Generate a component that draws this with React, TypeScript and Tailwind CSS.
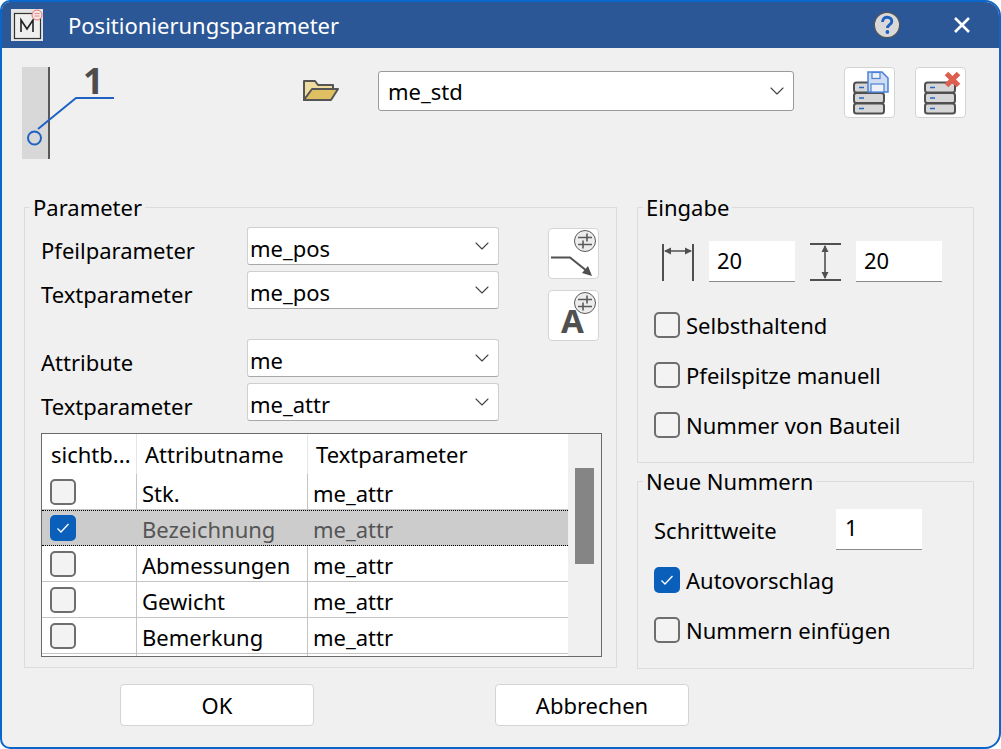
import { ChevronDown } from 'lucide-react';

const FONT = "font-['Noto_Sans',sans-serif]";

function Combo({ value, className, strong = false }: { value: string; className: string; strong?: boolean }) {
  return (
    <div
      className={`flex items-center justify-between bg-white border rounded-[3px] pr-[4px] text-[22px] leading-none ${
        strong ? 'border-[#9a9a9a] pl-[9px]' : 'border-[#cfcfcf] border-b-[#a8a8a8] pl-[2px] pt-[3px]'
      } ${className}`}
    >
      <span>{value}</span>
      <ChevronDown size={24} strokeWidth={1.1} className={`text-[#444] ${strong ? '' : '-mt-[3px]'}`} />
    </div>
  );
}

function Check({ checked = false }: { checked?: boolean }) {
  if (checked) {
    return (
      <span className="flex items-center justify-center w-[26px] h-[26px] rounded-[5px] bg-[#0a5fbb] shrink-0">
        <svg width="14" height="12" viewBox="0 0 14 12" fill="none">
          <path d="M1.5 6.5 L5 10 L12.5 2" stroke="white" strokeWidth="1.3" />
        </svg>
      </span>
    );
  }
  return <span className="block w-[26px] h-[26px] rounded-[5px] border-2 border-[#6e6e6e] bg-[#f3f3f3] shrink-0" />;
}

function CheckRow({ label, checked }: { label: string; checked?: boolean }) {
  return (
    <div className="flex items-center gap-[6px] text-[22px] leading-none h-[26px]">
      <Check checked={checked} />
      <span>{label}</span>
    </div>
  );
}

function IconBtn({ children }: { children: React.ReactNode }) {
  return (
    <div className="w-[51px] h-[51px] bg-white border border-[#d4d4d4] rounded-[4px] shrink-0">
      {children}
    </div>
  );
}

function Sliders({ cx, cy }: { cx: number; cy: number }) {
  return (
    <g>
      <circle cx={cx} cy={cy} r="10.5" fill="#ececec" stroke="#5a5a5a" strokeWidth="1" />
      <path d={`M${cx - 7} ${cy - 3.5}H${cx + 7}M${cx - 7} ${cy + 3.5}H${cx + 7}M${cx + 2} ${cy - 7.5}V${cy + 0.5}M${cx - 2} ${cy - 0.5}V${cy + 7.5}`} stroke="#5a5a5a" strokeWidth="1.6" />
    </g>
  );
}

function Stack() {
  return (
    <g fill="#d6d6d6" stroke="#505050" strokeWidth="2">
      <rect x="9" y="14.5" width="30" height="10" rx="2.5" />
      <rect x="9" y="25" width="30" height="10" rx="2.5" />
      <rect x="9" y="35.5" width="30" height="10" rx="2.5" />
      <path d="M14 19.5h5M14 30h5M14 40.5h5" stroke="#2a68c4" strokeWidth="1.6" />
    </g>
  );
}

const rows = [
  { name: 'Stk.', selected: false },
  { name: 'Bezeichnung', selected: true },
  { name: 'Abmessungen', selected: false },
  { name: 'Gewicht', selected: false },
  { name: 'Bemerkung', selected: false },
];

export default function App() {
  return (
    <div className={`w-[1001px] h-[749px] bg-white text-black overflow-hidden ${FONT}`}>
      <div className="h-full flex flex-col bg-[#f0f0f0] border-2 border-[#0b66c9] rounded-tl-[10px] rounded-tr-[16px] rounded-bl-[10px] rounded-br-[16px] overflow-hidden">
        {/* Title bar */}
        <div className="h-[46px] shrink-0 bg-[#2b5797] flex items-center pl-[9px] pr-[28px] text-white">
          <svg width="34" height="34" viewBox="0 0 34 34" className="shrink-0">
            <rect width="32" height="32" y="1" fill="#e4e4e4" />
            <rect x="3.5" y="5.5" width="26" height="25" fill="#efefef" stroke="#333" strokeWidth="1.2" />
            <path d="M10 24V12L16 21L22 12V24" fill="none" stroke="#222" strokeWidth="1.6" />
            <circle cx="26" cy="7" r="5" fill="#f4e4e4" stroke="#e07a70" strokeWidth="1" />
            <path d="M23.5 5.5h5M23.5 8h5" stroke="#e07a70" strokeWidth="0.8" />
          </svg>
          <span className="ml-[23px] text-[22px] leading-none">Positionierungsparameter</span>
          <svg width="28" height="28" viewBox="0 0 28 28" className="ml-auto">
            <circle cx="14" cy="14" r="12.6" fill="#d9d9d9" stroke="#555" strokeWidth="1.2" />
            <path d="M9.5 11 C9.5 7.5 12 6.2 14.2 6.2 C17 6.2 18.8 8 18.8 10.4 C18.8 13.6 14.4 13.6 14.4 17" fill="none" stroke="#1f5fc0" strokeWidth="2.9" />
            <circle cx="14.4" cy="21" r="1.9" fill="#1f5fc0" />
          </svg>
          <svg width="18" height="18" viewBox="0 0 18 18" className="ml-[52px]">
            <path d="M2 2L16 16M16 2L2 16" stroke="white" strokeWidth="2.6" />
          </svg>
        </div>

        {/* Profile row */}
        <div className="flex h-[159px] shrink-0 pl-[20px] pt-[19px]">
          <svg width="96" height="94" viewBox="0 0 96 94" className="shrink-0 overflow-visible">
            <rect x="0" y="0" width="27" height="92" fill="#d8d8d8" />
            <path d="M27 0V92" stroke="#585858" strokeWidth="2" />
            <path d="M16 62L54 31H92" fill="none" stroke="#1f62c4" strokeWidth="2" />
            <circle cx="12.5" cy="71" r="6.5" fill="none" stroke="#1f62c4" strokeWidth="2" />
            <text x="61" y="27" fontFamily="Noto Sans, sans-serif" fontWeight="700" fontSize="36" fill="#4d4d4d">1</text>
          </svg>
          <svg width="38" height="24" viewBox="0 0 38 24" className="ml-[184px] mt-[11px] shrink-0">
            <path d="M2 22V3H13L16 7H31V12H10L2 22Z" fill="#f0dc9e" stroke="#555" strokeWidth="2" strokeLinejoin="round" />
            <path d="M2 22L10 11H36L29 22H2Z" fill="#e0bf62" stroke="#555" strokeWidth="2" strokeLinejoin="round" />
          </svg>
          <Combo strong value="me_std" className="ml-[38px] mt-[4px] w-[416px] h-[40px]" />
          <div className="ml-[50px] flex gap-[20px]">
            <IconBtn>
              <svg width="49" height="49" viewBox="0 0 49 49">
                <Stack />
                <path d="M23 4H37L43 10V24H23Z" fill="#cfdcf2" stroke="#4a80d8" strokeWidth="1.5" />
                <rect x="27" y="4.5" width="8" height="6" fill="#eef2f8" stroke="#4a80d8" strokeWidth="1.2" />
                <rect x="26" y="16" width="13" height="8" fill="#eef2f8" stroke="#4a80d8" strokeWidth="1.2" />
              </svg>
            </IconBtn>
            <IconBtn>
              <svg width="49" height="49" viewBox="0 0 49 49">
                <Stack />
                <path d="M30.5 5.5L42.5 17.5M42.5 5.5L30.5 17.5" stroke="#de5f50" strokeWidth="5" />
              </svg>
            </IconBtn>
          </div>
        </div>

        {/* Main area */}
        <div className="flex gap-[20px] pl-[22px]">
          {/* Parameter group */}
          <div className="relative w-[593px] h-[461px] shrink-0 border border-[#dcdcdc] pl-[16px] pt-[19px]">
            <span className="absolute -top-[14px] left-[5px] bg-[#f0f0f0] px-[3px] text-[22px] leading-[26px]">Parameter</span>
            <div className="flex">
              <div className="w-[458px] shrink-0 flex flex-col">
                <div className="flex items-center h-[38px]">
                  <span className="w-[206px] shrink-0 pt-[8px] text-[22px] leading-none">Pfeilparameter</span>
                  <Combo value="me_pos" className="w-[252px] h-[38px]" />
                </div>
                <div className="flex items-center h-[38px] mt-[6px]">
                  <span className="w-[206px] shrink-0 pt-[8px] text-[22px] leading-none">Textparameter</span>
                  <Combo value="me_pos" className="w-[252px] h-[38px]" />
                </div>
                <div className="flex items-center h-[38px] mt-[30px]">
                  <span className="w-[206px] shrink-0 pt-[8px] text-[22px] leading-none">Attribute</span>
                  <Combo value="me" className="w-[252px] h-[38px]" />
                </div>
                <div className="flex items-center h-[38px] mt-[6px]">
                  <span className="w-[206px] shrink-0 pt-[8px] text-[22px] leading-none">Textparameter</span>
                  <Combo value="me_attr" className="w-[252px] h-[38px]" />
                </div>
              </div>
              <div className="ml-[49px] mt-[1px] flex flex-col gap-[11px]">
                <IconBtn>
                  <svg width="49" height="49" viewBox="0 0 49 49">
                    <Sliders cx={36} cy={12} />
                    <path d="M2 28.5H21L41 44.5" fill="none" stroke="#505050" strokeWidth="2" />
                    <path d="M33 44L43 47L39 37Z" fill="#505050" />
                  </svg>
                </IconBtn>
                <IconBtn>
                  <svg width="49" height="49" viewBox="0 0 49 49" className="overflow-visible">
                    <text x="12" y="42" fontFamily="Noto Sans, sans-serif" fontWeight="700" fontSize="33" fill="#505050">A</text>
                    <Sliders cx={36} cy={12} />
                  </svg>
                </IconBtn>
              </div>
            </div>

            {/* Attribute table */}
            <div className="mt-[12px] w-[561px] h-[224px] border border-[#6a6a6a] bg-[#f0f0f0] flex">
              <div className="w-[526px] bg-white flex flex-col overflow-hidden shrink-0">
                <div className="grid grid-cols-[95px_171px_260px] h-[40px] shrink-0 text-[22px] leading-none items-center">
                  <span className="pl-[9px] h-full flex items-center border-r border-[#e6e6e6]">sichtb...</span>
                  <span className="pl-[8px] h-full flex items-center border-r border-[#e6e6e6]">Attributname</span>
                  <span className="pl-[8px]">Textparameter</span>
                </div>
                {rows.map((row) => (
                  <div
                    key={row.name}
                    className={`grid grid-cols-[95px_171px_260px] h-[36px] shrink-0 text-[22px] leading-none items-center border-b ${
                      row.selected
                        ? 'bg-[#cccccc] text-[#555] border-dotted border-black border-t'
                        : 'border-[#c4c4c4]'
                    }`}
                  >
                    <div className={`pl-[8px] h-full flex items-center ${row.selected ? '' : 'border-r border-[#c4c4c4]'}`}>
                      <Check checked={row.selected} />
                    </div>
                    <span className={`pl-[5px] pt-[2px] h-full flex items-center ${row.selected ? '' : 'border-r border-[#c4c4c4]'}`}>{row.name}</span>
                    <span className="pl-[5px] pt-[2px]">me_attr</span>
                  </div>
                ))}
                <div className="grid grid-cols-[95px_171px_260px] flex-1">
                  <div className="border-r border-[#c4c4c4]" />
                  <div className="border-r border-[#c4c4c4]" />
                  <div />
                </div>
              </div>
              <div className="flex-1 pt-[34px] px-[7px]">
                <div className="h-[96px] bg-[#858585]" />
              </div>
            </div>
          </div>

          {/* Right column */}
          <div className="w-[337px] flex flex-col gap-[18px]">
            <div className="relative h-[256px] border border-[#dcdcdc] pl-[16px] pt-[33px] flex flex-col">
              <span className="absolute -top-[14px] left-[5px] bg-[#f0f0f0] px-[3px] text-[22px] leading-[26px]">Eingabe</span>
              <div className="flex items-center h-[41px]">
                <svg width="34" height="38" viewBox="0 0 34 38" className="ml-[7px]">
                  <path d="M2 1V38M32 1V38" stroke="#505050" strokeWidth="2" />
                  <path d="M4 8H30" stroke="#505050" strokeWidth="1.6" />
                  <path d="M3 8L10 4.5V11.5ZM31 8L24 4.5V11.5Z" fill="#505050" />
                </svg>
                <div className="ml-[14px] w-[86px] h-[41px] bg-white border-b border-[#8a8a8a] pl-[8px] pb-[2px] flex items-center text-[22px] leading-none">20</div>
                <svg width="34" height="38" viewBox="0 0 34 38" className="ml-[13px]">
                  <path d="M2 1H33M2 37H33" stroke="#505050" strokeWidth="2" />
                  <path d="M17 3V35" stroke="#505050" strokeWidth="1.6" />
                  <path d="M17 2L13.5 9H20.5ZM17 36L13.5 29H20.5Z" fill="#505050" />
                </svg>
                <div className="ml-[14px] w-[86px] h-[41px] bg-white border-b border-[#8a8a8a] pl-[8px] pb-[2px] flex items-center text-[22px] leading-none">20</div>
              </div>
              <div className="mt-[30px] flex flex-col gap-[24px]">
                <CheckRow label="Selbsthaltend" />
                <CheckRow label="Pfeilspitze manuell" />
                <CheckRow label="Nummer von Bauteil" />
              </div>
            </div>
            <div className="relative h-[188px] border border-[#dcdcdc] pl-[16px] pt-[27px] flex flex-col">
              <span className="absolute -top-[14px] left-[5px] bg-[#f0f0f0] px-[3px] text-[22px] leading-[26px]">Neue Nummern</span>
              <div className="flex items-center h-[41px]">
                <span className="w-[182px] text-[22px] leading-none">Schrittweite</span>
                <div className="w-[86px] h-[41px] bg-white border-b border-[#8a8a8a] pl-[9px] pb-[5px] flex items-center text-[22px] leading-none">1</div>
              </div>
              <div className="mt-[17px] flex flex-col gap-[24px]">
                <CheckRow label="Autovorschlag" checked />
                <CheckRow label="Nummern einfügen" />
              </div>
            </div>
          </div>
        </div>

        {/* Buttons */}
        <div className="flex pl-[118px] pt-[15px] gap-[181px]">
          <div className="w-[194px] h-[42px] bg-white border border-[#d4d4d4] rounded-[4px] flex items-center justify-center text-[22px] leading-none">OK</div>
          <div className="w-[194px] h-[42px] bg-white border border-[#d4d4d4] rounded-[4px] flex items-center justify-center text-[22px] leading-none">Abbrechen</div>
        </div>
      </div>
    </div>
  );
}
